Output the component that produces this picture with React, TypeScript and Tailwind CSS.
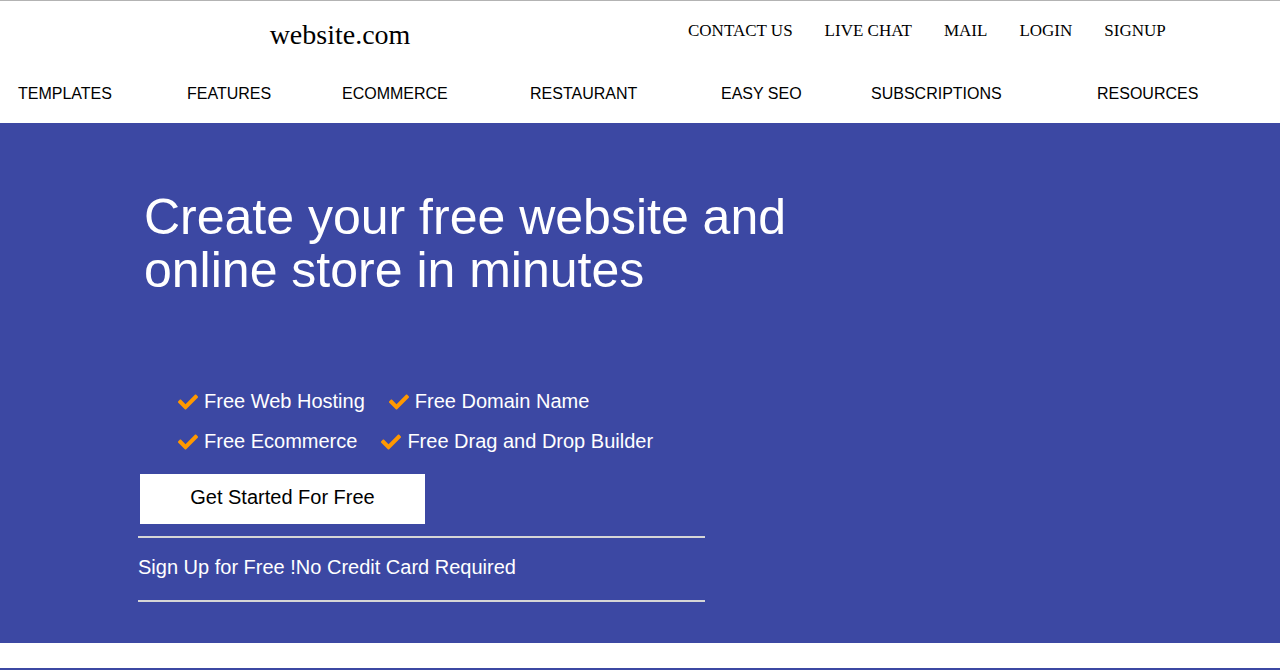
import { FaCheck } from "react-icons/fa";

const topLinks = ["CONTACT US", "LIVE CHAT", "MAIL", "LOGIN", "SIGNUP"];

const navItems = [
  { label: "TEMPLATES", w: "w-[169px]" },
  { label: "FEATURES", w: "w-[155px]" },
  { label: "ECOMMERCE", w: "w-[188px]" },
  { label: "RESTAURANT", w: "w-[191px]" },
  { label: "EASY SEO", w: "w-[150px]" },
  { label: "SUBSCRIPTIONS", w: "w-[226px]" },
  { label: "RESOURCES", w: "" },
];

function Perk({ text }: { text: string }) {
  return (
    <span className="flex items-center gap-[6px]">
      <FaCheck className="text-[#ff9800]" size={20} />
      <span>{text}</span>
    </span>
  );
}

export default function App() {
  return (
    <div className="min-h-[670px] bg-white font-['Liberation_Sans',Arial,sans-serif]">
      <header className="border-t border-[#b3b3b3]">
        <div className="flex h-[61px] items-start">
          <div className="w-[688px] pt-[17px] text-center font-['Liberation_Serif',serif] text-[28px] leading-[34px] text-black">
            <span className="relative left-[-4px]">website.com</span>
          </div>
          <nav className="flex gap-[32px] pt-[20px] font-['Liberation_Serif',serif] text-[17px] leading-[20px] text-black">
            {topLinks.map((l) => (
              <a key={l} href="#">
                {l}
              </a>
            ))}
          </nav>
        </div>
        <nav className="flex h-[61px] items-center pl-[18px] pt-[2px] text-[16px] text-black">
          {navItems.map((n) => (
            <a key={n.label} href="#" className={n.w}>
              {n.label}
            </a>
          ))}
        </nav>
      </header>

      <section className="h-[520px] bg-[#3c48a3] pl-[138px] pt-[68px] text-white">
        <h1 className="pl-[6px] text-[50px] leading-[53px]">
          Create your free website and
          <br />
          online store in minutes
        </h1>
        <div className="mt-[93px] flex flex-col gap-[17px] pl-[40px] text-[20px] leading-[23px]">
          <div className="flex gap-[24px]">
            <Perk text="Free Web Hosting" />
            <Perk text="Free Domain Name" />
          </div>
          <div className="flex gap-[24px]">
            <Perk text="Free Ecommerce" />
            <Perk text="Free Drag and Drop Builder" />
          </div>
        </div>
        <button className="ml-[2px] mt-[21px] h-[50px] w-[285px] bg-white pb-[4px] text-[20px] text-black">
          Get Started For Free
        </button>
        <hr className="mt-[12px] w-[567px] border-t-2 border-[#d6d6d6]" />
        <p className="mt-[18px] text-[20px] leading-[23px]">
          Sign Up for Free !No Credit Card Required
        </p>
        <hr className="mt-[21px] w-[567px] border-t-2 border-[#d6d6d6]" />
      </section>
      <div className="h-[25px]" />
      <div className="h-[2px] bg-[#3c48a3]" />
    </div>
  );
}
